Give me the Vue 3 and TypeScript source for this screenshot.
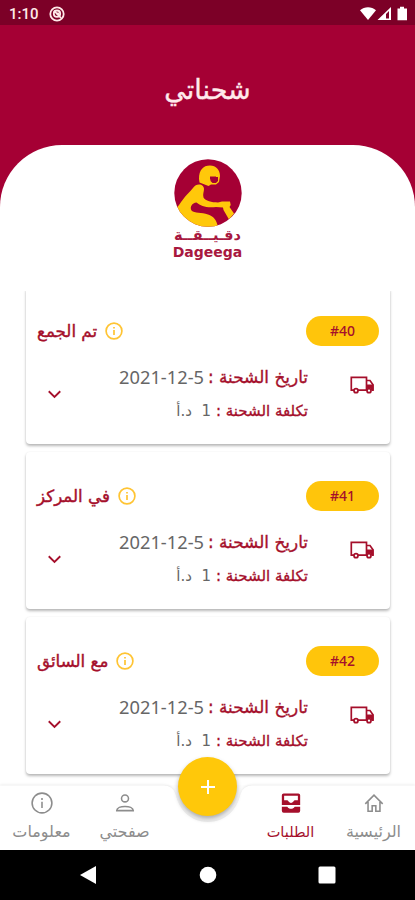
<script setup lang="ts">
interface Shipment {
  id: number
  status: string
  date: string
  cost: string
}

interface Tab {
  key: 'home' | 'orders' | 'profile' | 'about'
  label: string
}

const shipments: Shipment[] = [
  { id: 40, status: 'تم الجمع', date: '2021-12-5', cost: '1' },
  { id: 41, status: 'في المركز', date: '2021-12-5', cost: '1' },
  { id: 42, status: 'مع السائق', date: '2021-12-5', cost: '1' },
]

const tabs: Tab[] = [
  { key: 'home', label: 'الرئيسية' },
  { key: 'orders', label: 'الطلبات' },
  { key: 'profile', label: 'صفحتي' },
  { key: 'about', label: 'معلومات' },
]
</script>

<template>
  <div class="screen">
    <div class="statusbar">
      <span class="clock">1:10</span>
      <svg class="dnd" viewBox="0 0 16 16">
        <circle cx="8" cy="8" r="6.7" />
        <circle cx="8" cy="7.7" r="3.2" />
        <path d="M5 4.600 12 12M7 7.500h2.500v2" />
      </svg>
      <svg class="signals" viewBox="0 0 48 16">
        <path d="M0 4.200C4.500.3 11.500.3 16 4.200L8 14z" />
        <path fill-rule="evenodd" d="M17.500 14 31 1v13zM26 12.500h3V5l-3 3z" />
        <path d="M37.500 2.500h2.500V.7h4v1.800h3V14.300h-9.500z" />
      </svg>
    </div>

    <header class="header"><h1>شحناتي</h1></header>

    <main class="sheet" dir="rtl">
      <div class="brand">
        <svg class="emblem" viewBox="0 0 68 68">
          <defs><clipPath id="disc"><circle cx="34" cy="34" r="33.700" /></clipPath></defs>
          <g clip-path="url(#disc)">
            <path fill="#a50034" d="M0 0h68v68H0z" />
            <path fill="#ffc80a" fill-rule="evenodd" d="M25 20C25 11 29 6.500 36 6.500c6 0 10 4.500 10 10.500l-1 6-3 2.500H37L34.500 27 25.500 23.500zM36.500 18v4l2 2h3.500l2-2v-4z" />
            <path fill="#a50034" d="M36 17.500h6v3h-6z" />
            <path fill="#ffc80a" d="M25 25.500c3 0 5 2 5 4.500 0 3-1.500 5-.5 8.500 2 3.500 8 4.800 14.500 5L48 42.500h8l.7 3.500-1.200 2 4.500 6.500-5 6-5.500-9.500-.5-2.500-7-.5C32 49 27 47 22.500 43.500 18 44 15.500 48 17.500 51.500c3 3 10 1.500 16.500 4 5.500 2 8.500 5 10 12.500H10L1 51c4-4 8-12 14-17.500 3.500-3 5-8 10-8z" />
          </g>
        </svg>
        <span class="brand-ar">دقـيــقــة</span>
        <span class="brand-en" dir="ltr">Dageega</span>
      </div>

      <div class="list">
        <article v-for="item in shipments" :key="item.id" class="card">
          <div class="card-top">
            <span class="badge" dir="ltr">#{{ item.id }}</span>
            <span class="status">
              <svg class="info" viewBox="0 0 18 18"><circle cx="9" cy="9" r="7.900" /><path d="M9 8v5M9 5v1.500" /></svg>
              <span class="status-text">{{ item.status }}</span>
            </span>
          </div>
          <div class="card-body">
            <svg class="truck" viewBox="0 0 24 18">
              <path d="M4 14.200H1.300V1.300h15.200v12.900H8M16.500 4.500h3.500l3 4.200v5.500h-1.500" />
              <circle cx="6" cy="14.700" r="2" /><circle cx="19" cy="14.700" r="2" />
              <path class="solid" d="M17 8.500h6.500V14h-2.500a2 2 0 0 0-4 0z" />
            </svg>
            <div class="lines">
              <p class="date-line"><span>تاريخ الشحنة :</span><span class="date" dir="ltr">{{ item.date }}</span></p>
              <p class="cost-line"><span>تكلفة الشحنة :</span><span class="cost">{{ item.cost }}&nbsp; د.أ</span></p>
            </div>
            <svg class="chevron" viewBox="0 0 12 8"><path d="m.7 1 5.300 5.300L11.300 1" /></svg>
          </div>
        </article>
      </div>
    </main>

    <nav class="tabbar" dir="rtl">
      <svg class="tabbar-shape" viewBox="0 0 415 65" preserveAspectRatio="none">
        <path d="M0 .5H163Q173 .5 175.500 9C179 25 191 37 208 37S237 25 240.500 9Q243 .5 253 .5H415V65H0z" />
      </svg>
      <div v-for="tab in tabs" :key="tab.key" class="tab" :class="[tab.key, { active: tab.key === 'orders' }]">
        <svg v-if="tab.key === 'home'" class="icon" viewBox="0 0 24 24"><path d="M2.500 13 12 3.500l9.500 9.500M5.500 11v10H10v-6h4v6h4.500V11" /></svg>
        <svg v-else-if="tab.key === 'orders'" class="icon filled" viewBox="0 0 24 24">
          <path fill-rule="evenodd" d="M4 1.500h16a2 2 0 0 1 2 2v10.800H2V3.500a2 2 0 0 1 2-2zM4.500 4v5H8c1 0 2 3 4 3s3-3 4-3h3.500V4zM2 16h6c1 1.500 2.300 2.200 4 2.200s3-.7 4-2.200h6v4.500a2 2 0 0 1-2 2H4a2 2 0 0 1-2-2z" />
        </svg>
        <svg v-else-if="tab.key === 'profile'" class="icon" viewBox="0 0 24 24"><circle cx="12" cy="7" r="3.800" /><path d="M3 20.300c0-6 18-6 18 0z" /></svg>
        <svg v-else class="icon" viewBox="0 0 24 24"><circle cx="12" cy="12" r="10.800" /><path d="M12 10.500V17.500M12 6.500v2.200" /></svg>
        <span class="tab-label">{{ tab.label }}</span>
      </div>
      <button class="fab" aria-label="إضافة"><svg viewBox="0 0 14 14"><path d="M7 0v14M0 7h14" /></svg></button>
    </nav>

    <div class="sysnav">
      <svg viewBox="0 0 16 18"><path d="M0 9 16 0v18z" /></svg>
      <svg viewBox="0 0 18 18"><circle cx="9" cy="9" r="8.300" /></svg>
      <svg viewBox="0 0 18 18"><rect x=".5" y=".5" width="17" height="17" rx="1.500" /></svg>
    </div>
  </div>
</template>

<style>
body { margin: 0; }
</style>

<style scoped>
.screen {
  width: 415px;
  height: 900px;
  overflow: hidden;
  display: flex;
  flex-direction: column;
  background: #a50034;
  font-family: "DejaVu Sans", sans-serif;
  color: #a50f2b;
}
.screen * { box-sizing: border-box; }
svg { display: block; flex: none; fill: none; stroke: currentColor; }
.statusbar {
  height: 25px;
  flex: none;
  display: flex;
  align-items: center;
  padding: 2px 7px 0 9px;
  background: #7c0027;
  color: #ffe9e9;
}
.clock { width: 40px; font: 500 15px/20px Roboto, sans-serif; }
.dnd { width: 16px; height: 16px; stroke-width: 1.800; }
.signals { width: 48px; height: 16px; margin-left: auto; fill: #fff; stroke: none; }
.header {
  height: 120px;
  flex: none;
  display: flex;
  justify-content: center;
  align-items: center;
  padding-top: 10px;
}
h1 { margin: 0; font-size: 27px; line-height: 40px; font-weight: 400; color: #ffeaec; -webkit-text-stroke: .4px; }
.sheet {
  height: 640px;
  flex: none;
  display: flex;
  flex-direction: column;
  background: #fff;
  border-radius: 62px 62px 0 0;
}
.brand { height: 146px; flex: none; display: flex; flex-direction: column; align-items: center; padding-top: 14px; color: #a8183f; }
.emblem { width: 68px; height: 68px; stroke: none; }
.brand-ar { height: 17px; font-size: 14.500px; line-height: 17px; font-weight: 700; }
.brand-en { font-size: 14px; line-height: 17px; font-weight: 700; }
.list {
  height: 494px;
  overflow: hidden;
  display: flex;
  flex-direction: column;
  gap: 8px;
  padding: 0 25px 0 26px;
}
.card {
  height: 157px;
  flex: none;
  padding: 29px 11px 0;
  border-radius: 4px;
  background: #fff;
  box-shadow: 0 2px 3px rgba(0, 0, 0, .28), 0 0 2px rgba(0, 0, 0, .06);
}
.card:first-child { margin-top: -4px; }
.card-top { height: 30px; display: flex; justify-content: space-between; align-items: center; }
.badge {
  width: 73px;
  height: 30px;
  border-radius: 15px;
  background: #ffc50b;
  text-align: center;
  font: 500 14px/29px "Noto Sans", sans-serif;
}
.status { display: flex; align-items: center; gap: 8px; font-size: 16.700px; line-height: 28px; -webkit-text-stroke: .4px; }
.info { width: 18px; height: 18px; color: #ffc433; stroke-width: 1.700; }
.card-body { display: flex; padding: 14px 5px 0 11px; }
.truck { width: 24px; height: 18px; margin-top: 16px; stroke-width: 1.700; }
.solid { fill: currentColor; stroke: none; }
.lines { flex: 1; padding-right: 42px; }
p { margin: 0; display: flex; align-items: center; white-space: nowrap; -webkit-text-stroke: .35px; }
.date-line { height: 34px; gap: 4px; font-size: 16.900px; }
.cost-line { height: 34px; gap: 5px; font-size: 15px; }
.date, .cost { color: #666; -webkit-text-stroke: 0; }
.date { font-family: "Noto Sans", sans-serif; font-size: 18.300px; line-height: 24px; margin-top: -1px; }
.chevron { width: 13px; height: 9px; margin-top: 30px; stroke-width: 1.700; }
.tabbar {
  position: relative;
  height: 65px;
  flex: none;
  display: flex;
  background: #fdfdfd;
  color: #8d8d8d;
}
.tabbar-shape {
  position: absolute;
  inset: 0;
  width: 415px;
  height: 65px;
  fill: #fff;
  stroke: none;
  filter: drop-shadow(0 -1px 1px rgba(0, 0, 0, .07));
}
.tab { position: relative; width: 83px; display: flex; flex-direction: column; align-items: center; }
.tab.profile { margin-right: 83px; }
.tab.active { color: #a50f2b; }
.icon { width: 22px; height: 22px; margin-top: 7px; stroke-width: 1.700; }
.filled { fill: currentColor; stroke: none; }
.tab-label { margin-top: 7px; font-size: 16px; line-height: 22px; white-space: nowrap; }
.active .tab-label { font-size: 14.500px; }
.fab {
  position: absolute;
  left: 178px;
  top: -28px;
  width: 59px;
  height: 59px;
  padding: 0;
  border: 0;
  border-radius: 50%;
  display: grid;
  place-items: center;
  background: #ffc80a;
  color: #fff;
  box-shadow: 0 3px 5px rgba(0, 0, 0, .32);
}
.fab svg { width: 14px; height: 14px; stroke-width: 2; }
.sysnav {
  height: 50px;
  flex: none;
  display: flex;
  justify-content: space-between;
  align-items: center;
  padding: 0 79px;
  background: #000;
}
.sysnav svg { width: 18px; height: 18px; fill: #fff; stroke: none; }
</style>
